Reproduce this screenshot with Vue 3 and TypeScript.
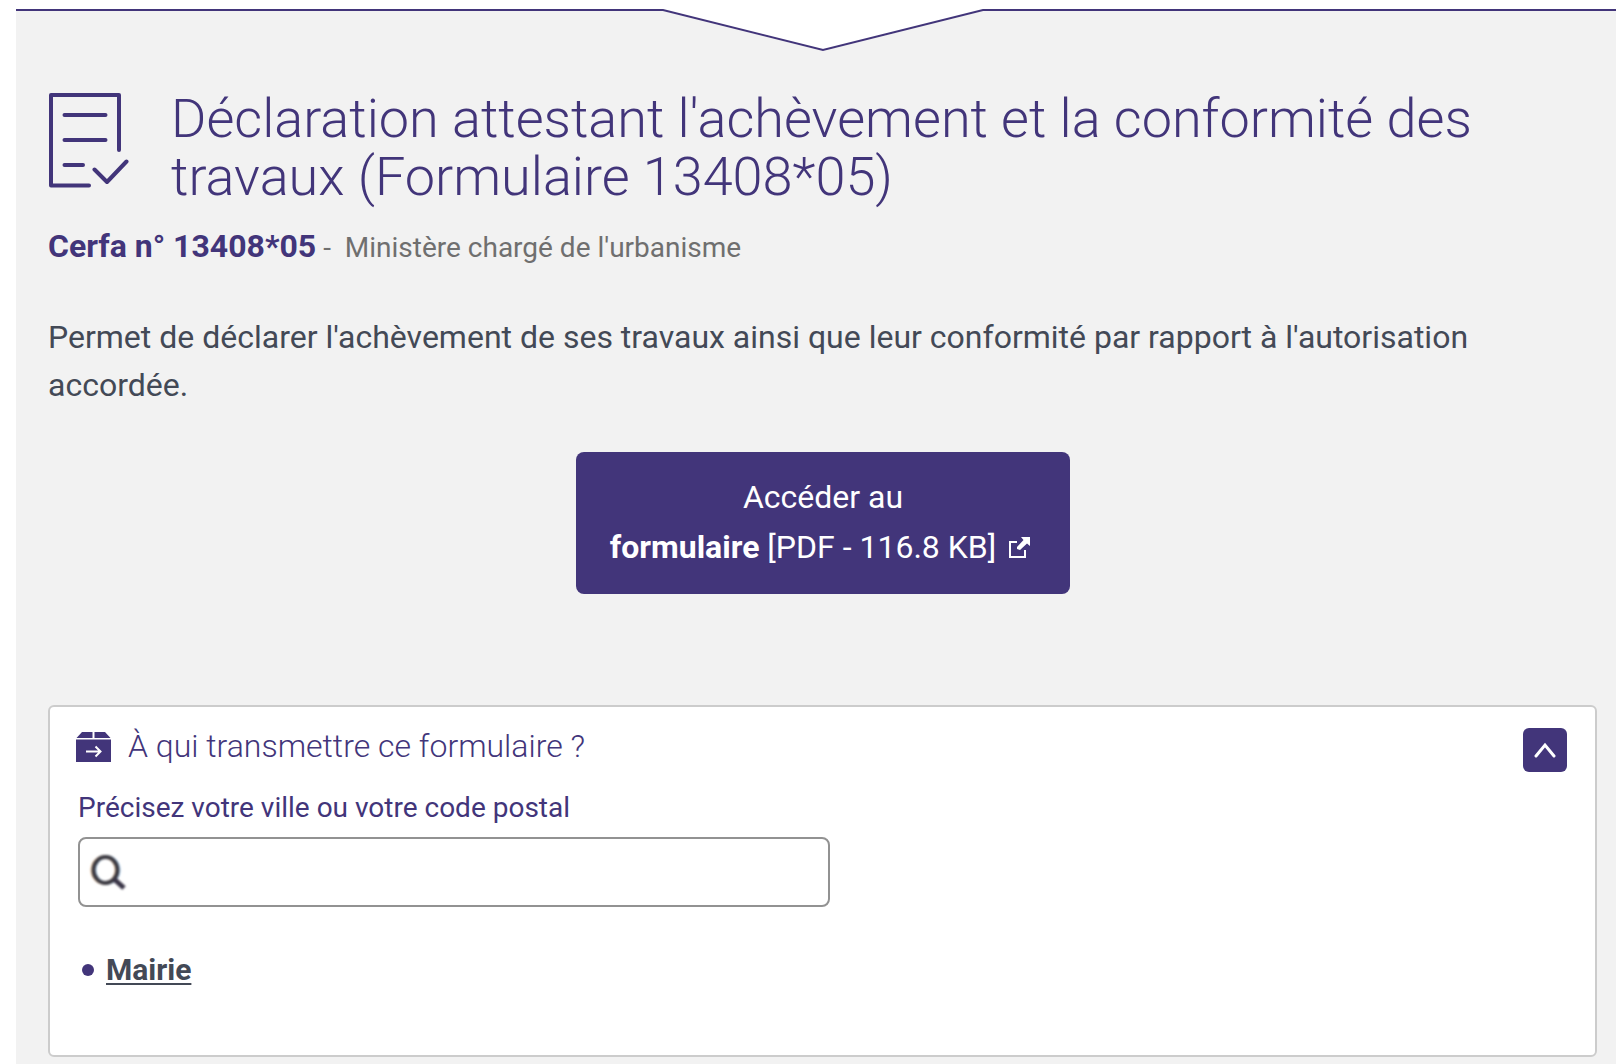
<script setup lang="ts">
import { ref } from 'vue'

const open = ref(true)
const city = ref('')
</script>

<template>
  <main class="panel">
    <svg class="notch" viewBox="0 0 324 43" aria-hidden="true">
      <path d="M0 0H324V2H322L162 42L2 2H0Z" fill="#fff" />
      <path d="M0 1H2L162 41L322 1H324" fill="none" stroke="#42357a" stroke-width="2" />
    </svg>

    <header class="heading">
      <svg class="form-icon" viewBox="0 0 81 96" aria-hidden="true">
        <g fill="none" stroke="#42357a" stroke-width="4" stroke-linecap="round" stroke-linejoin="round">
          <path d="M71 57V2H3V92.500H41" />
          <path d="M16.500 22H57.500M16.500 47H57.500M16.500 72H35" />
          <path d="M46.500 76.500L59 89L78.500 68.500" />
        </g>
      </svg>
      <h1>Déclaration attestant l'achèvement et la conformité des travaux (Formulaire 13408*05)</h1>
    </header>

    <p class="reference">
      <strong>Cerfa n° 13408*05</strong>
      <span class="ministry">-&nbsp; Ministère chargé de l'urbanisme</span>
    </p>

    <p class="description">
      Permet de déclarer l'achèvement de ses travaux ainsi que leur conformité par rapport à l'autorisation accordée.
    </p>

    <a class="download" href="#formulaire">
      <span>Accéder au</span>
      <span class="download-file">
        <span><strong>formulaire</strong> [PDF - 116.8 KB]</span>
        <svg class="external" viewBox="0 0 21 21" aria-hidden="true">
          <path d="M8 5H1V20H16V13" fill="none" stroke="#fff" stroke-width="2" />
          <path d="M12 0H21V9L18 6.500L11 13L8 12V10L14.500 3Z" fill="#fff" />
        </svg>
      </span>
    </a>

    <section class="card">
      <div class="card-head">
        <svg class="parcel" viewBox="0 0 35 30" aria-hidden="true">
          <path d="M6 0H16.500V6H0.500ZM18.500 0H29L34.500 6H18.500Z" fill="#42357a" />
          <path d="M0 7.500H35V30H0Z" fill="#42357a" />
          <path d="M10 19.500H24M19.500 14.500L24.500 19.500L19.500 24.500" fill="none" stroke="#fff" stroke-width="2" />
        </svg>
        <h2>À qui transmettre ce formulaire ?</h2>
        <button
          class="toggle"
          type="button"
          aria-label="Replier ou déplier"
          :aria-expanded="open"
          @click="open = !open"
        >
          <svg viewBox="0 0 22 16" aria-hidden="true">
            <path d="M2 14L11 3L20 14" fill="none" stroke="#fff" stroke-width="3" stroke-linecap="round" />
          </svg>
        </button>
      </div>
      <div v-show="open" class="card-body">
        <label for="city">Précisez votre ville ou votre code postal</label>
        <div class="search">
          <svg class="lens" viewBox="0 0 36 36" aria-hidden="true">
            <ellipse cx="14" cy="16" rx="12" ry="13" fill="none" stroke="#f0c79a" stroke-width="3" />
            <ellipse cx="17" cy="16" rx="12" ry="13" fill="none" stroke="#a9d2f5" stroke-width="3" />
            <ellipse cx="15.500" cy="16" rx="12" ry="13" fill="none" stroke="#3c3a42" stroke-width="4" />
            <path d="M24 25L34 34" stroke="#3a3547" stroke-width="5" />
          </svg>
          <input id="city" v-model="city" type="text" />
        </div>
        <ul>
          <li><a href="#mairie">Mairie</a></li>
        </ul>
      </div>
    </section>
  </main>
</template>

<style>
body {
  background: #fff;
}
</style>

<style scoped>
* {
  box-sizing: border-box;
}

.panel {
  display: flex;
  flex-direction: column;
  min-height: calc(100vh - 9px);
  margin: 9px 0 0 16px;
  padding: 0 18px 7px 32px;
  border-top: 2px solid #42357a;
  background: #f2f2f2;
  color: #434956;
  font-family: Roboto, "Liberation Sans", sans-serif;
  font-size: 32px;
}

.notch {
  display: block;
  width: 324px;
  height: 43px;
  margin: -2px auto 0;
}

.heading {
  display: flex;
  align-items: flex-start;
  gap: 42px;
  margin-top: 38px;
}

.form-icon {
  flex: none;
  width: 81px;
  height: 96px;
  margin-top: 3px;
}

h1,
h2 {
  margin: 0;
  color: #42357a;
  font-weight: 300;
}

h1 {
  font-size: 54px;
  line-height: 58px;
}

.reference {
  display: flex;
  align-items: baseline;
  gap: 7px;
  margin: 20px 0 0;
  line-height: 40px;
}

.reference strong {
  color: #42357a;
}

.ministry {
  color: #6f6f6f;
  font-size: 28px;
}

.description {
  margin: 45px 0 0;
  line-height: 48px;
}

.download {
  display: flex;
  flex-direction: column;
  align-items: center;
  align-self: center;
  margin-top: 43px;
  padding: 20px 34px 22px;
  border-radius: 8px;
  background: #42357a;
  color: #fff;
  line-height: 50px;
  text-decoration: none;
}

.download-file {
  display: flex;
  align-items: center;
  padding-right: 6px;
}

.external {
  width: 21px;
  height: 21px;
  margin-left: 13px;
}

.card {
  margin: 111px 1px 0 0;
  padding: 21px 28px 0;
  border: 2px solid #ccc;
  border-radius: 6px;
  background: #fff;
}

.card-head {
  display: flex;
  align-items: flex-start;
}

.parcel {
  width: 35px;
  height: 30px;
  margin: 4px 0 0 -2px;
}

h2 {
  flex: 1;
  margin-left: 17px;
  font-size: 32px;
  line-height: 36px;
}

.toggle {
  display: flex;
  align-items: center;
  justify-content: center;
  width: 44px;
  height: 44px;
  padding: 0;
  border: 0;
  border-radius: 6px;
  background: #42357a;
}

.toggle svg {
  width: 22px;
  height: 16px;
}

.card-body {
  padding: 18px 0 65px;
}

label {
  display: block;
  color: #42357a;
  font-size: 28px;
  line-height: 36px;
}

.search {
  display: flex;
  align-items: center;
  width: 100%;
  max-width: 752px;
  height: 70px;
  margin-top: 11px;
  padding-left: 10px;
  border: 2px solid #929292;
  border-radius: 8px;
  background: #fff;
}

.lens {
  flex: none;
  width: 36px;
  height: 36px;
  filter: blur(1px);
}

input {
  flex: 1;
  min-width: 0;
  height: 100%;
  padding: 0 12px;
  border: 0;
  outline: 0;
  background: transparent;
  color: inherit;
  font: inherit;
}

ul {
  margin: 43px 0 0;
  padding: 0;
  list-style: none;
}

li {
  display: flex;
  align-items: center;
  gap: 12px;
  padding-left: 4px;
  font-size: 30px;
  line-height: 40px;
}

li::before {
  width: 12px;
  height: 12px;
  border-radius: 50%;
  background: #42357a;
  content: "";
}

li a {
  color: inherit;
  font-weight: 700;
  text-decoration-thickness: 2px;
  text-underline-offset: 3px;
}
</style>
